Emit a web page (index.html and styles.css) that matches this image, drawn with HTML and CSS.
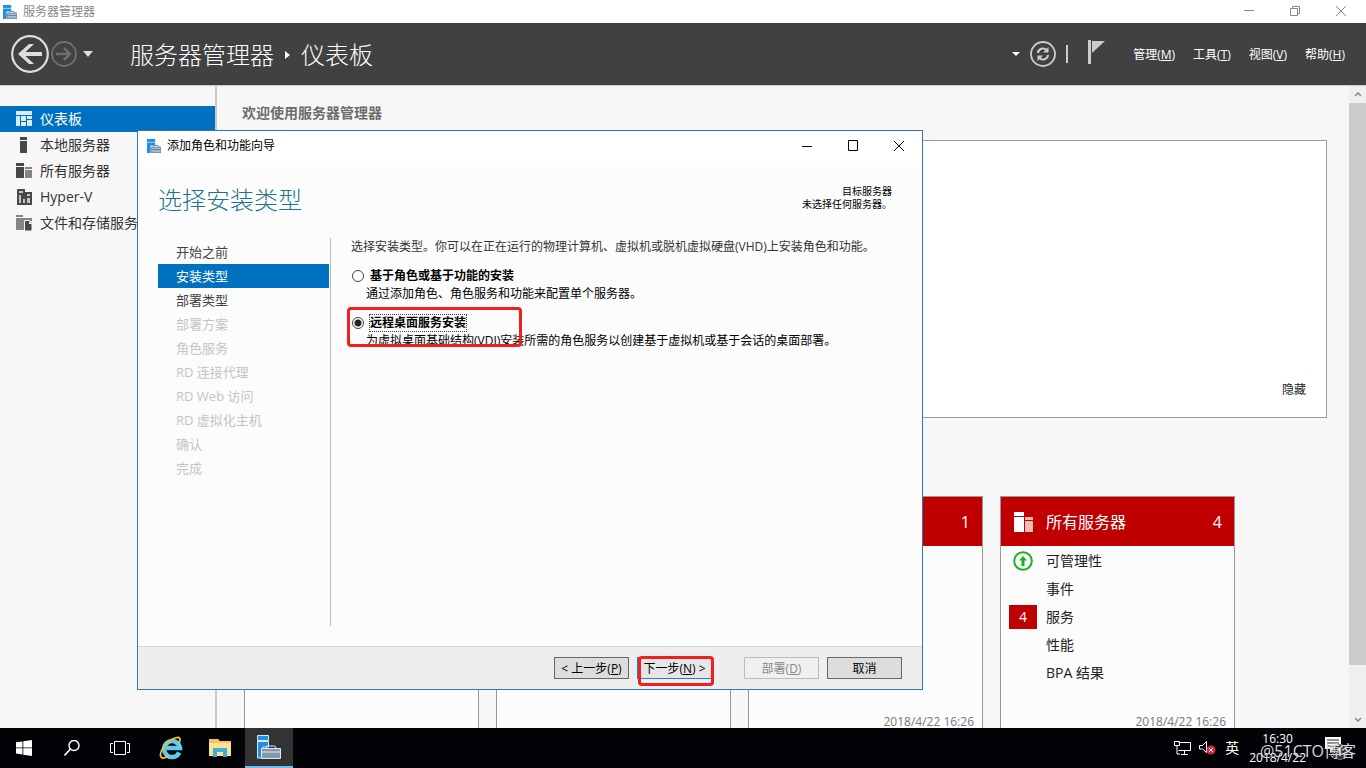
FILE: index.html
```html
<!DOCTYPE html>
<html lang="zh-CN">
<head>
<meta charset="utf-8">
<title>服务器管理器</title>
<link rel="stylesheet" href="styles.css">
</head>
<body>
<svg class="defs" aria-hidden="true">
  <symbol id="server-manager" viewBox="0 0 24 24">
    <path d="M0 0h14v5H0z" fill="#1f8fe0"/><path d="M0 6h14v5H6v13H0z" fill="#1f8fe0"/>
    <path d="M7 14h17v9H7z" fill="#a9bccd" stroke="#5d7f9e" stroke-width="1.500"/>
    <path d="M10 14l2-3h7l2 3M7 18h17" fill="none" stroke="#5d7f9e" stroke-width="1.500"/>
  </symbol>
</svg>
<div class="desktop">
  <header class="titlebar">
    <svg class="app-icon" viewBox="0 0 24 24"><use href="#server-manager"/></svg>
    <span class="titlebar-text">服务器管理器</span>
    <div class="window-controls window-controls-main">
      <button aria-label="最小化"><svg viewBox="0 0 12 12"><path d="M1 5.500h10"/></svg></button>
      <button aria-label="还原"><svg viewBox="0 0 12 12"><path d="M1.500 3.500h7v7h-7zM3.500 3.500v-2h7v7h-2"/></svg></button>
      <button aria-label="关闭"><svg viewBox="0 0 12 12"><path d="M1 1l10 10M11 1L1 11"/></svg></button>
    </div>
  </header>

  <div class="navbar">
    <button class="icon-button" aria-label="后退"><svg class="back" viewBox="0 0 38 38"><circle cx="19" cy="19" r="17.800" fill="none" stroke="#dedede" stroke-width="2.200"/><path d="M7 19L18 9h5l-8.500 8H31v4H14.500l8.500 8h-5z" fill="#dedede"/></svg></button>
    <button class="icon-button" aria-label="前进"><svg class="forward" viewBox="0 0 26 26"><circle cx="13" cy="13" r="12" fill="none" stroke="#707070" stroke-width="1.800"/><path d="M5 13h14M13 7l6 6-6 6" fill="none" stroke="#707070" stroke-width="2.500"/></svg></button>
    <button class="icon-button history" aria-label="历史"><svg class="caret" viewBox="0 0 10 6"><path d="M0 0h10L5 6z" fill="#dedede"/></svg></button>
    <h1 class="breadcrumb"><span>服务器管理器</span><svg class="crumb-arrow" viewBox="0 0 5 8"><path d="M0 0l5 4-5 4z" fill="#fff"/></svg><span>仪表板</span></h1>
    <div class="tools">
      <button class="icon-button" aria-label="选项"><svg class="small-caret" viewBox="0 0 8 4"><path d="M0 0h8L4 4z" fill="#fff"/></svg></button>
      <button class="icon-button" aria-label="刷新"><svg class="forward" viewBox="0 0 26 26"><circle cx="13" cy="13" r="12" fill="none" stroke="#ccc" stroke-width="1.800"/><path d="M8 12a5 5 0 0 1 8.500-3M18 14a5 5 0 0 1-8.500 3" fill="none" stroke="#ccc" stroke-width="2.200"/><path d="M18.500 6v5.500H13zM7.500 20v-5.500H13z" fill="#ccc"/></svg></button>
      <span class="bar"></span>
      <button class="icon-button" aria-label="通知"><svg class="flag" viewBox="0 0 17 24"><path d="M0 0h3v24H0z" fill="#ccc"/><path d="M4 1h13L4 13z" fill="#ccc"/></svg></button>
    </div>
    <nav class="menu">
      <button>管理(<u>M</u>)</button>
      <button>工具(<u>T</u>)</button>
      <button>视图(<u>V</u>)</button>
      <button>帮助(<u>H</u>)</button>
    </nav>
  </div>

  <div class="workspace">
    <nav class="sidebar">
      <a href="#" class="side-item side-active"><svg viewBox="0 0 16 16"><path d="M0 0h16v4H0zM0 5h4v10H0zM5 5h5v5H5zM11 5h5v3h-5zM5 11h5v4H5zM11 9h5v6h-5z" fill="#d7ebf8"/></svg>仪表板</a>
      <a href="#" class="side-item"><svg viewBox="0 0 16 16"><path d="M4 0h7v3H4zM4 4h7v12H4z" fill="#484848"/></svg>本地服务器</a>
      <a href="#" class="side-item"><svg viewBox="0 0 16 16"><path d="M0 0h8v3H0zM0 4h8v11H0z" fill="#484848"/><path d="M9 4h7v2H9zM9 7h7v8H9z" fill="#858585"/></svg>所有服务器</a>
      <a href="#" class="side-item"><svg viewBox="0 0 16 16"><path d="M1 0h8v3h7v13H1z" fill="#484848"/><path d="M3 2h4v2H3zM3 6h2v8H3zM11 5h3v2h-3zM11 9h3v5h-3zM7 10h2v4H7z" fill="#c4c4c4"/></svg>Hyper-V</a>
      <a href="#" class="side-item"><svg viewBox="0 0 16 16"><path d="M0 0h7v2H0zM0 3h16v3H8v9H0z" fill="#858585"/><path d="M8.500 5.500h5l2.500 2.500v8H8.500z" fill="#484848" stroke="#f7f7f7" stroke-width="1"/><path d="M13 6v3h3z" fill="#fff"/></svg>文件和存储服务</a>
    </nav>

    <main class="dashboard">
      <h2 class="welcome-title">欢迎使用服务器管理器</h2>
      <section class="welcome"><button class="hide-button">隐藏</button></section>
      <div class="tiles">
        <section class="tile"></section>
        <section class="tile"></section>
        <section class="tile">
          <h3 class="tile-head"><span class="tile-count">1</span></h3>
          <p class="tile-time">2018/4/22 16:26</p>
        </section>
        <section class="tile">
          <h3 class="tile-head"><svg viewBox="0 0 20 20"><path d="M0 0h10v4H0zM0 5h10v15H0z" fill="#fff"/><path d="M11 5h8v3h-8zM11 9h8v11h-8z" fill="#f0bcb8"/></svg>所有服务器<span class="tile-count">4</span></h3>
          <ul class="tile-list">
            <li><span class="status"><svg viewBox="0 0 20 20"><circle cx="10" cy="10" r="8.800" fill="#fff" stroke="#16b41e" stroke-width="2"/><path d="M10 5l4 4.500h-2.500V15h-3V9.500H6z" fill="#16b41e"/></svg></span>可管理性</li>
            <li><span class="status"></span>事件</li>
            <li><span class="status"><b class="alert">4</b></span>服务</li>
            <li><span class="status"></span>性能</li>
            <li><span class="status"></span>BPA 结果</li>
          </ul>
          <p class="tile-time">2018/4/22 16:26</p>
        </section>
      </div>
    </main>

    <div class="scrollbar">
      <button aria-label="向上滚动"><svg viewBox="0 0 8 5"><path d="M1 4l3-3 3 3"/></svg></button>
      <div class="thumb"></div>
      <button aria-label="向下滚动"><svg viewBox="0 0 8 5"><path d="M1 1l3 3 3-3"/></svg></button>
    </div>
  </div>

  <section class="dialog" role="dialog" aria-labelledby="dialog-name">
    <header class="dialog-bar">
      <svg class="app-icon" viewBox="0 0 24 24"><use href="#server-manager"/></svg>
      <span id="dialog-name">添加角色和功能向导</span>
      <div class="window-controls">
        <button aria-label="最小化"><svg viewBox="0 0 12 12"><path d="M1 6.500h10"/></svg></button>
        <button aria-label="最大化"><svg viewBox="0 0 12 12"><path d="M1.500 .500h9v10h-9z"/></svg></button>
        <button aria-label="关闭"><svg viewBox="0 0 12 12"><path d="M1 1l10 10M11 1L1 11"/></svg></button>
      </div>
    </header>
    <div class="dialog-head">
      <h2>选择安装类型</h2>
      <p>目标服务器<br>未选择任何服务器。</p>
    </div>
    <div class="dialog-body">
      <ol class="steps">
        <li>开始之前</li>
        <li class="current">安装类型</li>
        <li>部署类型</li>
        <li class="pending">部署方案</li>
        <li class="pending">角色服务</li>
        <li class="pending">RD 连接代理</li>
        <li class="pending">RD Web 访问</li>
        <li class="pending">RD 虚拟化主机</li>
        <li class="pending">确认</li>
        <li class="pending">完成</li>
      </ol>
      <form class="choices">
        <p class="intro">选择安装类型。你可以在正在运行的物理计算机、虚拟机或脱机虚拟硬盘(VHD)上安装角色和功能。</p>
        <div class="choice">
          <input type="radio" name="type" id="role"><label for="role">基于角色或基于功能的安装</label>
          <p>通过添加角色、角色服务和功能来配置单个服务器。</p>
        </div>
        <div class="choice">
          <input type="radio" name="type" id="rds" checked><label for="rds" class="focused">远程桌面服务安装</label>
          <p>为虚拟桌面基础结构(VDI)安装所需的角色服务以创建基于虚拟机或基于会话的桌面部署。</p>
          <span class="mark mark-choice"></span>
        </div>
      </form>
    </div>
    <footer class="dialog-foot">
      <button>&lt; 上一步(<u>P</u>)</button>
      <div class="next"><button>下一步(<u>N</u>) &gt;</button><span class="mark mark-next"></span></div>
      <button class="deploy" disabled>部署(<u>D</u>)</button>
      <button>取消</button>
    </footer>
  </section>

  <footer class="taskbar">
    <button class="task" aria-label="开始"><svg width="16" height="16" viewBox="0 0 16 16"><path d="M0 2.300l6.500-.9v6.100H0zM7.300 1.300L16 0v7.500H7.300zM0 8.300h6.500v6.200L0 13.600zM7.300 8.300H16V16l-8.700-1.300z" fill="#fff"/></svg></button>
    <button class="task" aria-label="搜索"><svg width="16" height="16" viewBox="0 0 16 16"><circle cx="10" cy="5.500" r="5" fill="none" stroke="#fff" stroke-width="1.400"/><path d="M6.500 9L.5 15.500" stroke="#fff" stroke-width="1.600"/></svg></button>
    <button class="task" aria-label="任务视图"><svg width="20" height="16" viewBox="0 0 20 16"><path d="M4.500 1.500h11v13h-11zM3 3.500H.5v9H3M17 3.500h2.500v9H17" fill="none" stroke="#fff"/></svg></button>
    <div class="pinned">
      <button class="task" aria-label="Internet Explorer"><svg width="24" height="24" viewBox="0 0 24 24"><path d="M20.300 16.500a8 8 0 1 1 .7-4.500H7" fill="none" stroke="#5fcbf3" stroke-width="4.500"/><path d="M3 22C-2 18 7 5 16 2c5-2 6 1 4 5M3 22c2 1 5-1 7-2" fill="none" stroke="#f2c230" stroke-width="1.800"/></svg></button>
      <button class="task" aria-label="文件资源管理器"><svg width="22" height="20" viewBox="0 0 22 20"><path d="M0 1h9l2 2h11v15H0z" fill="#f0c75e"/><path d="M0 5h22v13H0z" fill="#fde292"/><path d="M4 10h14v9h-4v-5H8v5H4z" fill="#38b2d8"/></svg></button>
      <button class="task task-active" aria-label="服务器管理器"><svg width="24" height="24" viewBox="0 0 24 24"><path d="M.5.500h11v5H.5zM.500 6.500h11V12H6v11H.500z" fill="#1f8fe0" stroke="#d5ebfa"/><path d="M4.500 13.500h19v10h-19z" fill="#8699ad" stroke="#dfe8ef"/><path d="M9 13l1-2h8l1 2M5 17h18" fill="none" stroke="#dfe8ef"/></svg></button>
    </div>
    <div class="tray">
      <svg width="17" height="14" viewBox="0 0 17 14"><path d="M4.500 1.500h12v8h-12M10.500 10v3M7 13.500h7M.5.500h5v4h-5zM3 5v8h3" fill="none" stroke="#fff"/></svg>
      <svg width="18" height="14" viewBox="0 0 18 14"><path d="M.5 4.500h3l4-4v11l-4-3.500h-3z" fill="none" stroke="#fff"/><circle cx="12" cy="9" r="4.500" fill="#d5293d"/><path d="M10 7l4 4M14 7l-4 4" stroke="#fff"/></svg>
      <span class="lang">英</span>
      <time class="clock">16:30<br>2018/4/22</time>
      <svg class="notice" width="24" height="24" viewBox="0 0 24 24"><path d="M0 1h16v12H9l-4 4v-4H0z" fill="#fff"/><path d="M2 4h12M2 7h12M2 10h12" stroke="#222"/><circle cx="15" cy="16" r="7.500" fill="#333" stroke="#777"/><path d="M13 14l2-2v8" fill="none" stroke="#fff" stroke-width="1.500"/></svg>
    </div>
    <span class="watermark">@51CTO博客</span>
  </footer>
</div>
</body>
</html>
```

FILE: styles.css
```css
* { box-sizing: border-box; }
body, h1, h2, h3, p, ul, ol { margin: 0; padding: 0; }
ul, ol { list-style: none; }
body {
  font: 12px/18px "Open Sans", "Noto Sans CJK SC", sans-serif;
  color: #222;
  background: #f7f7f7;
}
button { font: inherit; color: inherit; background: none; border: 0; padding: 0; }
svg { display: block; flex: none; }
.defs { display: none; }

.desktop { position: relative; display: flex; flex-direction: column; height: 100vh; overflow: hidden; }

.titlebar { display: flex; align-items: center; flex: none; height: 23px; padding-left: 3px; background: #fff; color: #888; }
.app-icon { width: 14px; height: 14px; margin-right: 6px; }
.window-controls { display: flex; margin-left: auto; }
.window-controls button { display: grid; place-items: center; width: 46px; height: 28px; }
.window-controls svg { width: 12px; height: 12px; fill: none; stroke: #000; }
.window-controls-main { padding: 0 2px 2px 0; }
.window-controls-main button { height: 20px; }
.window-controls-main svg { stroke: #888; }

.navbar { display: flex; align-items: center; flex: none; height: 62px; padding: 0 21px 0 11px; background: #414141; color: #fff; }
.icon-button { display: grid; place-items: center; }
.back { width: 38px; height: 38px; margin-right: 2px; }
.forward { width: 26px; height: 26px; }
.history { margin-left: 6px; }
.caret { width: 10px; height: 6px; }
.breadcrumb { display: flex; align-items: center; gap: 11px; margin-left: 37px; padding-top: 2px; font-size: 24px; font-weight: 300; line-height: 32px; }
.crumb-arrow { width: 5px; height: 8px; }
.tools { display: flex; align-items: center; gap: 10px; margin-left: auto; }
.small-caret { width: 8px; height: 4px; }
.bar { width: 2px; height: 18px; background: #ccc; }
.flag { width: 17px; height: 24px; margin: 0 0 4px 10px; }
.menu { display: flex; gap: 18px; margin-left: 28px; padding-top: 2px; }

.workspace { display: flex; flex: 1; min-height: 0; border-top: 1px solid #ccc; }
.sidebar { flex: none; width: 217px; padding-top: 20px; border-right: 2px solid #ccc; }
.side-item { display: flex; align-items: center; gap: 8px; height: 26px; padding-left: 16px; font-size: 14px; color: #333; text-decoration: none; white-space: nowrap; }
.side-item svg { width: 16px; height: 16px; }
.side-active { background: #0070c0; color: #fff; }

.dashboard { display: flex; flex-direction: column; flex: 1; min-width: 0; padding: 17px 22px 0 27px; overflow: hidden; }
.welcome-title { font-size: 14px; line-height: 20px; font-weight: 700; color: #6c6c6c; margin-left: -2px; }
.welcome { display: flex; flex: none; justify-content: flex-end; align-items: flex-end; height: 278px; margin-top: 17px; padding: 0 20px 18px; background: #fff; border: 1px solid #999; }
.tiles { display: grid; grid-template-columns: repeat(4, 235px); gap: 17px; flex: none; margin-top: 78px; }
.tile { display: flex; flex-direction: column; height: 242px; background: #fcfcfc; border: 1px solid #999; }
.tile-head { display: flex; align-items: center; height: 49px; padding: 0 12px 0 13px; font-size: 16px; font-weight: 400; background: #c00000; color: #fff; }
.tile-head svg { width: 20px; height: 20px; margin-right: 12px; }
.tile-count { margin-left: auto; }
.tile-list { padding: 1px 8px 0; }
.tile-list li { display: flex; align-items: center; height: 28px; font-size: 14px; }
.status { display: grid; place-items: center; width: 28px; margin-right: 9px; }
.status svg { width: 20px; height: 20px; }
.alert { width: 28px; line-height: 24px; font-weight: 400; text-align: center; background: #c00000; color: #fff; }
.tile-time { margin-top: auto; padding: 0 8px 6px; font-size: 12px; text-align: right; color: #777; }

.scrollbar { display: flex; flex-direction: column; flex: none; width: 17px; background: #f0f0f0; }
.scrollbar button { display: grid; place-items: center; height: 17px; }
.scrollbar svg { width: 8px; height: 5px; fill: none; stroke: #888; stroke-width: 1.500; }
.thumb { height: 562px; margin-bottom: auto; background: #cdcdcd; }

.dialog { position: absolute; left: 137px; top: 130px; display: flex; flex-direction: column; width: 786px; height: 560px; background: #fcfcfc; border: 1px solid #2a7ab8; color: #000; }
.dialog-bar { display: flex; align-items: center; flex: none; height: 30px; padding-left: 9px; background: #fff; }
.dialog-head { display: flex; justify-content: space-between; flex: none; height: 77px; padding: 22px 30px 0 20px; }
.dialog-head h2 { padding-top: 1px; font-size: 24px; line-height: 32px; font-weight: 300; color: #1f7391; }
.dialog-head p { padding-top: 2px; font-size: 10px; line-height: 13px; text-align: right; }
.dialog-body { display: flex; flex: 1; padding: 0 20px 20px; }
.steps { flex: none; width: 173px; padding: 2px 1px 0 0; border-right: 1px solid #bbb; }
.steps li { height: 24px; padding-left: 18px; font-size: 13px; line-height: 24px; color: #444; }
.steps .current { background: #0070c0; color: #fff; }
.steps .pending { color: #c4c4c4; }
.choices { flex: 1; padding-left: 20px; white-space: nowrap; }
.intro { color: #333; }
.choice { position: relative; display: grid; grid-template-columns: 12px auto; column-gap: 6px; justify-content: start; align-items: center; margin-top: 11px; }
.choice input { appearance: none; width: 12px; height: 12px; margin: 0 0 0 1px; border: 1px solid #444; border-radius: 50%; background: #fff; }
.choice input:checked { background: radial-gradient(circle, #222 3px, #fff 4px); }
.choice label { justify-self: start; font-weight: 700; line-height: 16px; border: 1px dotted transparent; }
.choice .focused { border-color: #444; }
.choice p { grid-column: 1 / -1; padding-left: 15px; line-height: 18px; }
.mark { position: absolute; border: 3px solid #f0201c; border-radius: 4px; pointer-events: none; }
.mark-choice { left: -4px; top: -7px; width: 175px; height: 40px; }
.dialog-foot { display: flex; justify-content: flex-end; gap: 8px; flex: none; height: 43px; padding: 10px 20px 0; background: #eee; border-top: 1px solid #d5d5d5; }
.dialog-foot button { width: 75px; height: 22px; padding-top: 1px; line-height: 19px; border: 1px solid #666; background: #ddd; }
.dialog-foot .next { position: relative; }
.next button { border-color: #1e80dc; background: #e6e6e6; }
.mark-next { left: 1px; top: -1px; width: 76px; height: 30px; }
.dialog-foot .deploy { margin-left: 24px; border-color: #bbb; background: #f0f0f0; color: #888; }

.taskbar { position: relative; display: flex; flex: none; height: 40px; background: #020307; color: #fff; }
.task { display: grid; place-items: center; width: 48px; height: 40px; }
.pinned { display: flex; gap: 1px; margin-left: 3px; }
.task-active { background: #333; border-bottom: 2px solid #76b9ed; }
.tray { display: flex; align-items: center; margin-left: auto; padding-right: 17px; }
.tray > svg { margin-right: 8px; }
.lang { font-size: 14px; margin-right: 10px; }
.clock { line-height: 19px; text-align: center; }
.tray > .notice { margin: 0 0 0 19px; }
.watermark { position: absolute; right: 10px; top: 11px; font-size: 16px; line-height: 24px; color: #d8d8d8; }
```
